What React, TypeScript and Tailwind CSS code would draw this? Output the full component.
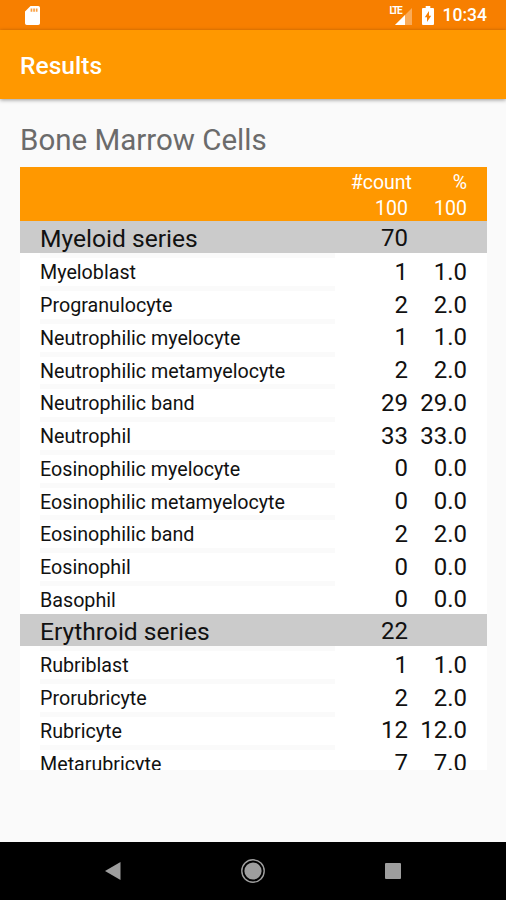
type Cell = { name: string; count: number };
type Series = { title: string; cells: Cell[]; total: number };

const series: Series[] = [
  {
    title: "Myeloid series",
    total: 70,
    cells: [
      { name: "Myeloblast", count: 1 },
      { name: "Progranulocyte", count: 2 },
      { name: "Neutrophilic myelocyte", count: 1 },
      { name: "Neutrophilic metamyelocyte", count: 2 },
      { name: "Neutrophilic band", count: 29 },
      { name: "Neutrophil", count: 33 },
      { name: "Eosinophilic myelocyte", count: 0 },
      { name: "Eosinophilic metamyelocyte", count: 0 },
      { name: "Eosinophilic band", count: 2 },
      { name: "Eosinophil", count: 0 },
      { name: "Basophil", count: 0 },
    ],
  },
  {
    title: "Erythroid series",
    total: 22,
    cells: [
      { name: "Rubriblast", count: 1 },
      { name: "Prorubricyte", count: 2 },
      { name: "Rubricyte", count: 12 },
      { name: "Metarubricyte", count: 7 },
    ],
  },
];

function StatusBar() {
  return (
    <div className="flex h-[30px] shrink-0 items-center bg-[#f77f00] pl-[25px] pr-[19px] text-white">
      <svg width="15" height="19" viewBox="0 0 15 19" fill="currentColor">
        <path d="M5.5 0h7.7A1.8 1.8 0 0 1 15 1.8v15.4a1.8 1.8 0 0 1-1.8 1.8H1.8A1.8 1.8 0 0 1 0 17.2V5.5z" />
        <path d="M5.6 2.5h1.7v3.2H5.6zM8.2 2.5h1.7v3.2H8.2zM10.8 2.5h1.7v3.2h-1.7z" fill="#f77f00" opacity="0.75" />
      </svg>
      <div className="ml-auto flex items-center">
        <div className="relative h-[19px] w-[22px]">
          <svg className="absolute bottom-0 right-0" width="17" height="17" viewBox="0 0 17 17" fill="currentColor">
            <path d="M17 0v17H0z" opacity="0.35" />
            <path d="M10 7v10H0z" />
          </svg>
          <span className="absolute left-0 top-0 text-[10px] font-bold leading-[9px] tracking-[-1.6px]">LTE</span>
        </div>
        <svg className="ml-[10px]" width="12" height="19" viewBox="0 0 12 19" fill="currentColor">
          <path d="M3.7 0h4.6v2H11a1 1 0 0 1 1 1v15a1 1 0 0 1-1 1H1a1 1 0 0 1-1-1V3a1 1 0 0 1 1-1h2.7z" />
          <path d="M7 5v4.8h2.2L5 16v-4.8H2.8z" fill="#f77f00" />
        </svg>
        <span className="ml-[9px] mt-[2px] text-[17.5px] font-medium leading-none">10:34</span>
      </div>
    </div>
  );
}

function CellRow({ cell }: { cell: Cell }) {
  return (
    <div className="flex h-[32.75px] shrink-0 px-5 text-[#111]">
      <div className="w-[295px]">
        <div className="h-[5px] bg-[#fafafa]" />
        <div className="pt-[2px] text-[19.7px] leading-[25.75px]">{cell.name}</div>
      </div>
      <div className="w-[73px] pt-[2.5px] text-right text-[24px] leading-[32px]">{cell.count}</div>
      <div className="flex-1 pt-[2.5px] text-right text-[24px] leading-[32px]">{cell.count.toFixed(1)}</div>
    </div>
  );
}

function ResultsTable() {
  return (
    <div className="flex h-[603px] flex-col overflow-hidden bg-white">
      <div className="h-[53.5px] shrink-0 bg-[#ff9800] pr-5 pt-[3px] text-[19.5px] leading-[26px] text-white">
        <div className="flex justify-end">
          <span>#count</span>
          <span className="w-[55px] text-right">%</span>
        </div>
        <div className="flex justify-end">
          <span>100</span>
          <span className="w-[59px] text-right">100</span>
        </div>
      </div>
      {series.map((s) => (
        <div key={s.title} className="shrink-0">
          <div className="flex h-[32.75px] bg-[#cbcbcb] pl-5 text-[24px] leading-[35.5px] text-[#111]">
            <div className="w-[295px] text-[24.6px]">{s.title}</div>
            <div className="w-[73px] text-right">{s.total}</div>
          </div>
          {s.cells.map((c) => (
            <CellRow key={c.name} cell={c} />
          ))}
        </div>
      ))}
    </div>
  );
}

function NavBar() {
  return (
    <div className="flex h-[58px] shrink-0 items-center justify-between bg-black px-[105px] text-[#9e9e9e]">
      <svg width="16" height="18" viewBox="0 0 16 18" fill="currentColor">
        <path d="M15.5 0v18L0 9z" />
      </svg>
      <svg width="24" height="24" viewBox="0 0 24 24" fill="currentColor">
        <circle cx="12" cy="12" r="11.2" fill="none" stroke="currentColor" strokeWidth="1.4" />
        <circle cx="12" cy="12" r="8.6" />
      </svg>
      <div className="size-4 rounded-[1px] bg-[#9e9e9e]" />
    </div>
  );
}

export default function App() {
  return (
    <div className="flex h-[900px] w-[506px] flex-col overflow-hidden bg-[#fafafa] font-[Roboto,sans-serif]">
      <StatusBar />
      <header className="flex h-[69px] shrink-0 items-center bg-[#ff9800] pl-5 pt-[3px] text-[24.6px] font-medium text-white shadow-[0_1px_4px_rgba(0,0,0,0.4)]">
        Results
      </header>
      <main className="flex-1 px-5 pr-[19px] pt-[21px]">
        <h1 className="h-[47px] text-[29.5px] leading-[40px] text-[#6b6b6b]">Bone Marrow Cells</h1>
        <ResultsTable />
      </main>
      <NavBar />
    </div>
  );
}
